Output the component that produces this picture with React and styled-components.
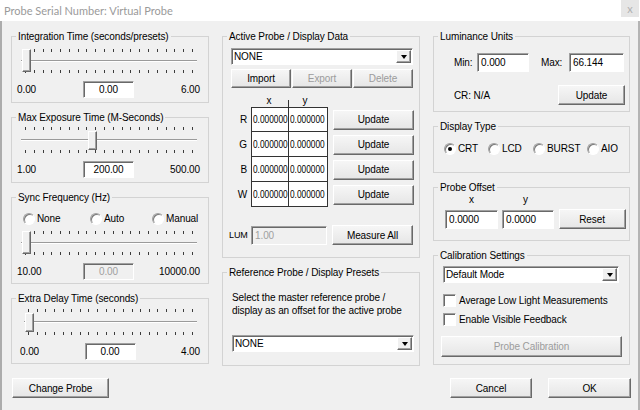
import React from 'react'
import styled, { createGlobalStyle, css } from 'styled-components'

const GlobalStyle = createGlobalStyle`
  html, body {
    margin: 0;
    padding: 0;
    background: #f0f0f0;
  }
  body {
    font-family: 'Liberation Sans', Arial, sans-serif;
    font-size: 10px;
    letter-spacing: -0.1px;
    color: #000;
  }
  *, *::before, *::after {
    box-sizing: border-box;
  }
`

const sunken = css`
  border: 1px solid;
  border-color: #a0a0a0 #fff #fff #a0a0a0;
  box-shadow: inset 1px 1px 0 #696969;
`

const raised = css`
  border: 1px solid;
  border-color: #fff #696969 #696969 #fff;
  box-shadow: inset -1px -1px 0 #a0a0a0;
`

const Window = styled.div`
  width: 640px;
  height: 410px;
  display: flex;
  flex-direction: column;
  background: #f0f0f0;
  overflow: hidden;
`

const TitleBar = styled.div`
  height: 21px;
  flex-shrink: 0;
  background: #fff;
  display: flex;
  align-items: center;
  justify-content: space-between;
  padding-left: 4px;
  font-family: Lato, 'Liberation Sans', sans-serif;
  font-size: 11px;
  letter-spacing: 0;
  color: #9a9a9a;
`

const CloseBox = styled.div`
  align-self: flex-start;
  width: 18px;
  height: 17px;
  margin-right: 1px;
  background: #e6e6e6;
  color: #b0b0b0;
  font-size: 11px;
  display: flex;
  align-items: center;
  justify-content: center;
`

const Body = styled.div`
  flex: 1;
  display: flex;
  flex-direction: column;
  padding: 9px 7px 0 9px;
  border-left: 2px solid #acacac;
  border-right: 2px solid #b4b4b4;
`

const Columns = styled.div`
  display: flex;
  gap: 13px;
  height: 336px;
`

const Column = styled.div`
  width: ${p => p.$w}px;
  display: flex;
  flex-direction: column;
  gap: 8px;
`

const Group = styled.fieldset`
  margin: 0;
  padding: 0;
  min-width: 0;
  height: ${p => p.$h}px;
  border: 1px solid #d3d3d3;
`

const Legend = styled.legend`
  margin-left: 4px;
  padding: 0 2px;
  height: 13px;
  line-height: 13px;
`

const GroupBody = styled.div`
  display: flex;
  flex-direction: column;
  padding-top: ${p => p.$top ?? 0}px;
  padding-left: ${p => p.$left ?? 0}px;
  padding-right: ${p => p.$right ?? 0}px;
`

/* sliders */

const SliderWrap = styled.div`
  position: relative;
  height: ${p => (p.$tall ? 24 : 26)}px;
  margin: ${p => p.$mt ?? 0}px 11px 0 9px;
  display: flex;
  flex-direction: column;
  justify-content: space-between;
`

const TickRow = styled.div`
  display: flex;
  justify-content: space-between;
  padding: 0 4px;
`

const Tick = styled.span`
  width: 1px;
  height: 3px;
  background: #3c3c3c;
`

const Track = styled.div`
  height: 2px;
  border-top: 1px solid #9a9a9a;
  border-bottom: 1px solid #fff;
`

const Thumb = styled.div`
  position: absolute;
  top: ${p => (p.$tall ? 0 : 4)}px;
  width: 9px;
  height: ${p => (p.$tall ? 23 : 19)}px;
  background: #f0f0f0;
  ${raised}
`

const ValueRow = styled.div`
  display: grid;
  grid-template-columns: 1fr 51px 1fr;
  align-items: center;
  height: 17px;
  margin-top: 8px;
  padding: 0 8px 0 5px;

  & > :last-child {
    justify-self: end;
  }
`

const NumBox = styled.div`
  width: ${p => p.$w ?? 51}px;
  height: ${p => p.$h ?? 17}px;
  ${sunken}
  background: ${p => (p.$disabled ? '#f0f0f0' : '#fff')};
  color: ${p => (p.$disabled ? '#a0a0a0' : '#000')};
  display: flex;
  align-items: center;
  justify-content: ${p => (p.$align === 'left' ? 'flex-start' : 'center')};
  padding-left: ${p => (p.$align === 'left' ? 3 : 0)}px;
  white-space: nowrap;
`

/* radios and checks */

const RadioRow = styled.div`
  display: grid;
  grid-template-columns: ${p => p.$cols};
  height: 13px;
  align-items: center;
  padding-left: ${p => p.$left}px;
`

const RadioItem = styled.label`
  display: flex;
  align-items: center;
  gap: 2px;
  white-space: nowrap;
`

const RadioCircle = styled.span`
  position: relative;
  flex-shrink: 0;
  width: 12px;
  height: 12px;
  border-radius: 50%;
  background: #fff;
  border: 1px solid;
  border-color: #a0a0a0 #fff #fff #a0a0a0;
  box-shadow: inset 1px 1px 0 #7a7a7a;

  ${p => p.$checked && css`
    &::after {
      content: '';
      position: absolute;
      left: 3px;
      top: 3px;
      width: 4px;
      height: 4px;
      border-radius: 50%;
      background: #000;
    }
  `}
`

const CheckRow = styled.label`
  display: flex;
  align-items: center;
  gap: 3px;
  height: 13px;
  margin-top: ${p => p.$mt}px;
`

const CheckBox = styled.span`
  width: 13px;
  height: 13px;
  background: #fff;
  ${sunken}
`

/* buttons and selects */

const Button = styled.button`
  font: inherit;
  letter-spacing: inherit;
  width: ${p => p.$w}px;
  height: ${p => p.$h ?? 20}px;
  padding: 0;
  margin: 0;
  margin-top: ${p => p.$mt ?? 0}px;
  background: linear-gradient(#f6f6f6, #e6e6e6);
  ${raised}
  color: ${p => (p.disabled ? '#9c9c9c' : '#000')};
  flex-shrink: 0;
`

const Select = styled.div`
  display: flex;
  align-items: stretch;
  width: ${p => p.$w}px;
  height: 17px;
  margin-top: ${p => p.$mt ?? 0}px;
  background: #fff;
  ${sunken}
`

const SelectText = styled.span`
  flex: 1;
  display: flex;
  align-items: center;
  padding-left: 2px;
`

const DropButton = styled.span`
  width: 15px;
  margin: 1px;
  display: flex;
  align-items: center;
  justify-content: center;
  background: #f0f0f0;
  ${raised}

  &::after {
    content: '';
    border-left: 3px solid transparent;
    border-right: 3px solid transparent;
    border-top: 4px solid #000;
  }
`

const ButtonStrip = styled.div`
  display: flex;
  gap: 1px;
  margin-top: 4px;
`

/* data table */

const DataHeader = styled.div`
  display: flex;
  height: 14px;
  margin-top: 5px;
  padding-left: 28px;
`

const HeaderCell = styled.span`
  position: relative;
  width: ${p => p.$w}px;
  display: flex;
  align-items: center;
  justify-content: center;
  padding-right: ${p => (p.$divider ? 6 : 2)}px;

  ${p => p.$divider && css`
    &::before {
      content: '';
      position: absolute;
      left: -1px;
      bottom: 0;
      width: 1px;
      height: 7px;
      background: #333;
    }
  `}
`

const DataRow = styled.div`
  display: flex;
  align-items: center;
  height: 25px;
`

const RowLabel = styled.span`
  width: 28px;
  text-align: right;
  padding-right: 4px;
`

const Cells = styled.div`
  display: flex;
  height: 100%;
  background: #fff;
  border: 1px solid #333;
  border-top-width: ${p => (p.$first ? 1 : 0)}px;
`

const Cell = styled.span`
  width: ${p => p.$w}px;
  display: flex;
  align-items: center;
  padding-left: 1px;
  overflow: hidden;
  white-space: nowrap;
  border-right: ${p => (p.$divider ? '1px solid #333' : 'none')};
`

const Digits = styled.span`
  display: inline-block;
  letter-spacing: 0;
  transform: scaleX(0.83);
  transform-origin: left center;
`

const RowButton = styled(Button)`
  margin-left: 5px;
`

const LumRow = styled.div`
  display: flex;
  align-items: center;
  height: 20px;
  margin-top: 18px;
`

const LumLabel = styled.span`
  width: 28px;
  padding-left: 6px;
  font-size: 9px;
`

/* right column pieces */

const Prose = styled.p`
  margin: 0;
  line-height: 13px;
`

const UnitRow = styled.div`
  display: grid;
  grid-template-columns: 23px 52px 40px 55px;
  align-items: center;
  height: 19px;

  & > :nth-child(3) {
    padding-left: 12px;
  }
`

const UnitFooter = styled.div`
  display: flex;
  align-items: center;
  justify-content: space-between;
  height: 20px;
  margin-top: 13px;
  padding-right: 4px;
`

const OffsetGrid = styled.div`
  display: grid;
  grid-template-columns: 53px 52px 67px;
  grid-template-rows: 10px 20px;
  column-gap: 4px;
  row-gap: 5px;
  align-items: center;
  justify-items: center;

  & > :nth-child(2) {
    margin-right: 5px;
  }

  & > :last-child {
    margin-left: 1px;
  }
`

const Footer = styled.div`
  display: flex;
  align-items: center;
  gap: 16px;
  margin-top: 12px;
  padding-left: 1px;

  & > :first-child {
    margin-right: auto;
  }
`

function Slider({ frac = 0, tall, mt }) {
  const ticks = Array.from({ length: 20 })
  return (
    <SliderWrap $tall={tall} $mt={mt}>
      <TickRow>{ticks.map((_, i) => <Tick key={i} />)}</TickRow>
      <Track />
      <TickRow>{ticks.map((_, i) => <Tick key={i} />)}</TickRow>
      <Thumb $tall={tall} style={{ left: `${1 + frac * 166}px` }} />
    </SliderWrap>
  )
}

function Values({ min, value, max, disabled }) {
  return (
    <ValueRow>
      <span>{min}</span>
      <NumBox $disabled={disabled}>{value}</NumBox>
      <span>{max}</span>
    </ValueRow>
  )
}

function Radio({ label, checked }) {
  return (
    <RadioItem>
      <RadioCircle $checked={checked} />
      {label}
    </RadioItem>
  )
}

function Dropdown({ value, w, mt }) {
  return (
    <Select $w={w} $mt={mt}>
      <SelectText>{value}</SelectText>
      <DropButton />
    </Select>
  )
}

const channels = ['R', 'G', 'B', 'W']

function App() {
  return (
    <Window>
      <GlobalStyle />
      <TitleBar>
        <span>Probe Serial Number: Virtual Probe</span>
        <CloseBox>x</CloseBox>
      </TitleBar>

      <Body>
        <Columns>
          <Column $w={198}>
            <Group $h={73}>
              <Legend>Integration Time (seconds/presets)</Legend>
              <GroupBody $top={6}>
                <Slider tall frac={0} />
                <Values min="0.00" value="0.00" max="6.00" />
              </GroupBody>
            </Group>

            <Group $h={72}>
              <Legend>Max Exposure Time (M-Seconds)</Legend>
              <GroupBody $top={3}>
                <Slider frac={0.4} />
                <Values min="1.00" value="200.00" max="500.00" />
              </GroupBody>
            </Group>

            <Group $h={93}>
              <Legend>Sync Frequency (Hz)</Legend>
              <GroupBody $top={8}>
                <RadioRow $cols="67px 62px auto" $left={11}>
                  <Radio label="None" />
                  <Radio label="Auto" />
                  <Radio label="Manual" />
                </RadioRow>
                <Slider tall frac={0} mt={6} />
                <Values min="10.00" value="0.00" max="10000.00" disabled />
              </GroupBody>
            </Group>

            <Group $h={72}>
              <Legend>Extra Delay Time (seconds)</Legend>
              <GroupBody $top={4} $left={3}>
                <Slider frac={0} />
                <Values min="0.00" value="0.00" max="4.00" />
              </GroupBody>
            </Group>
          </Column>

          <Column $w={198}>
            <Group $h={228}>
              <Legend>Active Probe / Display Data</Legend>
              <GroupBody $top={5} $left={8}>
                <Dropdown value="NONE" w={182} />
                <ButtonStrip>
                  <Button $w={60} $h={19}>Import</Button>
                  <Button $w={60} $h={19} disabled>Export</Button>
                  <Button $w={60} $h={19} disabled>Delete</Button>
                </ButtonStrip>
              </GroupBody>
              <DataHeader>
                <HeaderCell $w={38}>x</HeaderCell>
                <HeaderCell $w={38} $divider>y</HeaderCell>
              </DataHeader>
              {channels.map((c, i) => (
                <DataRow key={c}>
                  <RowLabel>{c}</RowLabel>
                  <Cells $first={i === 0}>
                    <Cell $w={37} $divider><Digits>0.000000</Digits></Cell>
                    <Cell $w={38}><Digits>0.000000</Digits></Cell>
                  </Cells>
                  <RowButton $w={81} $h={20}>Update</RowButton>
                </DataRow>
              ))}
              <LumRow>
                <LumLabel>LUM</LumLabel>
                <NumBox $w={76} $h={19} $disabled $align="left">1.00</NumBox>
                <RowButton $w={81} $h={20}>Measure All</RowButton>
              </LumRow>
            </Group>

            <Group $h={100}>
              <Legend>Reference Probe / Display Presets</Legend>
              <GroupBody $top={12} $left={9}>
                <Prose>
                  Select the master reference probe /<br />
                  display as an offset for the active probe
                </Prose>
                <Dropdown value="NONE" w={182} mt={18} />
              </GroupBody>
            </Group>
          </Column>

          <Column $w={197}>
            <Group $h={82}>
              <Legend>Luminance Units</Legend>
              <GroupBody $top={10} $left={20}>
                <UnitRow>
                  <span>Min:</span>
                  <NumBox $w={52} $h={19} $align="left">0.000</NumBox>
                  <span>Max:</span>
                  <NumBox $w={55} $h={19} $align="left">66.144</NumBox>
                </UnitRow>
                <UnitFooter>
                  <span>CR: N/A</span>
                  <Button $w={67} $h={20}>Update</Button>
                </UnitFooter>
              </GroupBody>
            </Group>

            <Group $h={53}>
              <Legend>Display Type</Legend>
              <GroupBody $top={9}>
                <RadioRow $cols="44px 45px 54px auto" $left={10}>
                  <Radio label="CRT" checked />
                  <Radio label="LCD" />
                  <Radio label="BURST" />
                  <Radio label="AIO" />
                </RadioRow>
              </GroupBody>
            </Group>

            <Group $h={60}>
              <Legend>Probe Offset</Legend>
              <GroupBody $left={11}>
                <OffsetGrid>
                  <span>x</span>
                  <span>y</span>
                  <span />
                  <NumBox $w={53} $h={19} $align="left">0.0000</NumBox>
                  <NumBox $w={52} $h={19} $align="left">0.0000</NumBox>
                  <Button $w={67} $h={20}>Reset</Button>
                </OffsetGrid>
              </GroupBody>
            </Group>

            <Group $h={116}>
              <Legend>Calibration Settings</Legend>
              <GroupBody $top={4} $left={9}>
                <Dropdown value="Default Mode" w={176} />
                <CheckRow $mt={11}>
                  <CheckBox />
                  Average Low Light Measurements
                </CheckRow>
                <CheckRow $mt={6}>
                  <CheckBox />
                  Enable Visible Feedback
                </CheckRow>
              </GroupBody>
              <GroupBody $left={7}>
                <Button $w={181} $h={21} $mt={10} disabled>
                  Probe Calibration
                </Button>
              </GroupBody>
            </Group>
          </Column>
        </Columns>

        <Footer>
          <Button $w={97} $h={20}>Change Probe</Button>
          <Button $w={82} $h={20}>Cancel</Button>
          <Button $w={83} $h={20}>OK</Button>
        </Footer>
      </Body>
    </Window>
  )
}

export default App
